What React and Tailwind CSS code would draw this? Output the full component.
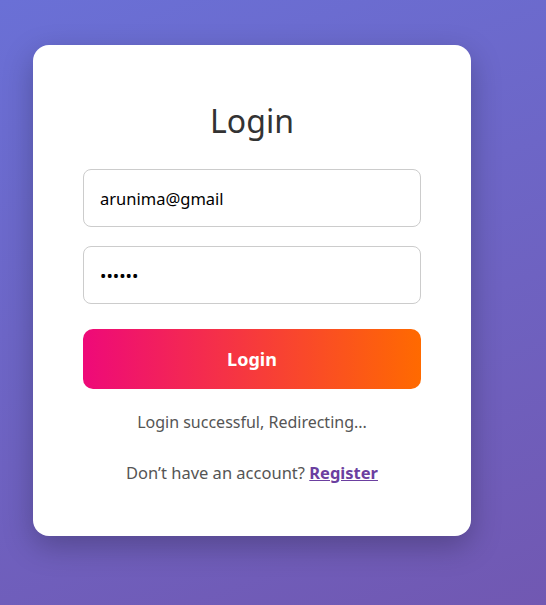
import React, { useState } from 'react';

const App = () => {
  const [email, setEmail] = useState('arunima@gmail');
  const [password, setPassword] = useState('123456');
  const [message] = useState('Login successful, Redirecting...');

  return (
    <div className="min-h-[605px] w-full bg-[linear-gradient(160deg,#6a70d6_0%,#7158b2_100%)] pl-[33px] pt-[45px] font-['Noto_Sans',sans-serif]">
      <div className="w-[438px] rounded-2xl bg-white px-[50px] pt-[54px] pb-[50px] shadow-[0_10px_30px_rgba(0,0,0,0.25)]">
        <h2 className="text-center text-[32px] leading-[44px] font-normal text-[#333]">Login</h2>

        <form className="mt-[26px] flex flex-col gap-[19px]" onSubmit={(e) => e.preventDefault()}>
          <input
            type="email"
            value={email}
            onChange={(e) => setEmail(e.target.value)}
            className="h-[58px] w-full rounded-lg border border-[#ccc] px-4 text-[16.5px] text-black outline-none"
          />
          <input
            type="password"
            value={password}
            onChange={(e) => setPassword(e.target.value)}
            className="h-[58px] w-full rounded-lg border border-[#ccc] px-4 text-[17px] text-black outline-none"
          />
          <button
            type="submit"
            className="mt-[6px] h-[60px] w-full rounded-[10px] bg-[linear-gradient(90deg,#ee0979,#ff6a00)] text-[18px] font-bold text-white"
          >
            Login
          </button>
        </form>

        {/* Status message */}
        <p className="mt-[21px] text-center text-[16px] text-[#555]">{message}</p>

        <p className="mt-[27px] text-center text-[16.5px] text-[#555]">
          Don’t have an account?{' '}
          <a href="#" className="font-bold text-[#6b3fa0] underline">Register</a>
        </p>
      </div>
    </div>
  );
};

export default App;
